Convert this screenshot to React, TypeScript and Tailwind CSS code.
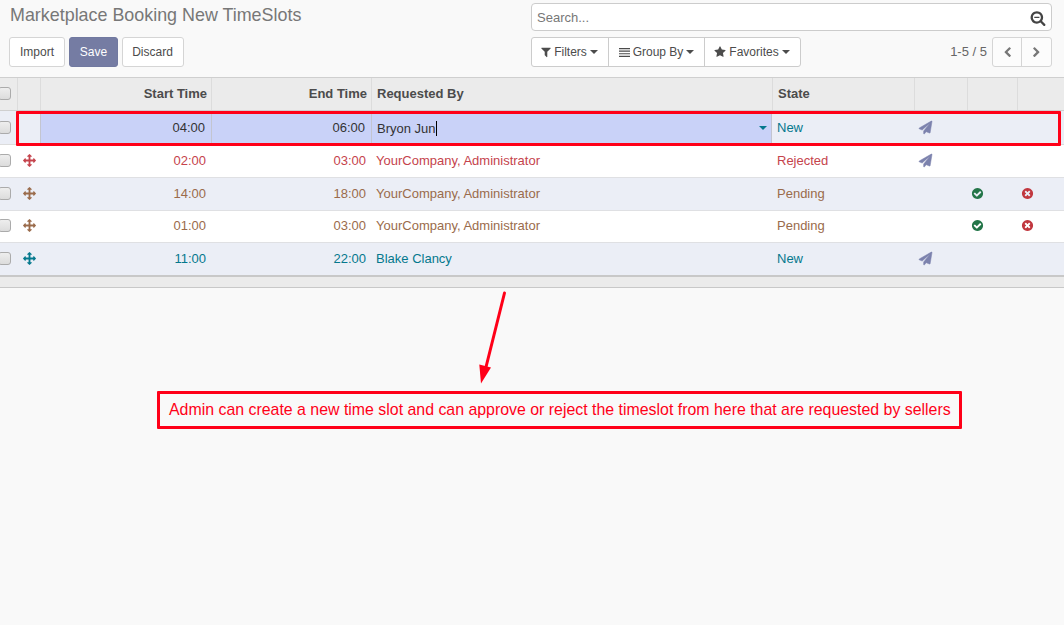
import React from "react";

const DISC =
  "m387-226q0 209-103 385.5t-279.5 279.5-385.5 103-385.5-103-279.5-279.5-103-385.5 103-385.5 279.5-279.5 385.5-103 385.5 103 279.5 279.5 103 385.5z";

const ICONS = {
  plane:
    "M1764 11q33 24 27 64l-256 1536q-5 29-32 45-14 8-31 8-11 0-24-5l-453-185-242 295q-18 23-49 23-13 0-22-4-19-7-30.5-23.5t-11.5-36.5v-349l864-1059-1069 925-395-162q-37-14-40-55-2-40 32-59l1664-960q15-9 32-9 20 0 36 11z",
  move:
    "M1792 896q0 26-19 45l-256 256q-19 19-45 19t-45-19-19-45v-128h-384v384h128q26 0 45 19t19 45-19 45l-256 256q-19 19-45 19t-45-19l-256-256q-19-19-19-45t19-45 45-19h128v-384h-384v128q0 26-19 45t-45 19-45-19l-256-256q-19-19-19-45t19-45l256-256q19-19 45-19t45 19 19 45v128h384v-384h-128q-26 0-45-19t-19-45 19-45l256-256q19-19 45-19t45 19l256 256q19 19 19 45t-19 45-45 19h-128v384h384v-128q0-26 19-45t45-19 45 19l256 256q19 19 19 45z",
  check:
    "M1412 734q0-28-18-46l-91-90q-19-19-45-19t-45 19l-408 407-226-226q-19-19-45-19t-45 19l-91 90q-18 18-18 46 0 27 18 45l362 362q19 19 45 19 27 0 46-19l543-543q18-18 18-45zm252 162q0 209-103 385.5t-279.5 279.5-385.5 103-385.5-103-279.5-279.5-103-385.5 103-385.5 279.5-279.5 385.5-103 385.5 103 279.5 279.5 103 385.5z",
  times:
    "M1277 1122q0-26-19-45l-181-181 181-181q19-19 19-45 0-27-19-46l-90-90q-19-19-46-19-26 0-45 19l-181 181-181-181q-19-19-45-19-27 0-46 19l-90 90q-19 19-19 46 0 26 19 45l181 181-181 181q-19 19-19 45 0 27 19 46l90 90q19 19 46 19 26 0 45-19l181-181 181 181q19 19 45 19 27 0 46-19l90-90q19-19 19-46z" +
    DISC,
  filter:
    "M1595 295q17 41-14 70l-493 493v742q0 42-39 59-13 5-25 5-27 0-45-19l-256-256q-19-19-19-45v-486l-493-493q-31-29-14-70 17-39 59-39h1280q42 0 59 39z",
  star:
    "M1728 647q0 22-26 48l-363 354 86 500q1 7 1 20 0 21-10.5 35.5t-30.5 14.5q-19 0-40-12l-449-236-449 236q-22 12-40 12-21 0-31.5-14.5t-10.5-35.5q0-6 2-20l86-500-364-354q-25-27-25-48 0-37 56-46l502-73 225-455q19-41 49-41t49 41l225 455 502 73q56 9 56 46z",
  bars: "M0 170h1792v190H0zM0 590h1792v190H0zM0 1010h1792v190H0zM0 1430h1792v190H0z",
  searchMinus:
    "M480 768h576v128h-576zM1216 832q0-185-131.5-316.5t-316.5-131.5-316.5 131.5-131.5 316.5 131.5 316.5 316.5 131.5 316.5-131.5 131.5-316.5zm512 832q0 52-38 90t-90 38q-54 0-90-38l-343-342q-179 124-399 124-143 0-273.5-55.5t-225-150-150-225-55.5-273.5 55.5-273.5 150-225 225-150 273.5-55.5 273.5 55.5 225 150 150 225 55.5 273.5q0 220-124 399l343 343q37 37 37 90z",
  chevron:
    "M1427 301l-531 531 531 531q19 19 19 45t-19 45l-166 166q-19 19-45 19t-45-19l-742-742q-19-19-19-45t19-45l742-742q19-19 45-19t45 19l166 166q19 19 19 45t-19 45z",
};

function Icon({ name, className }: { name: keyof typeof ICONS; className: string }) {
  return (
    <svg viewBox="0 0 1792 1792" fill="currentColor" fillRule="evenodd" className={`shrink-0 ${className}`}>
      <path d={ICONS[name]} />
    </svg>
  );
}

function Plane() {
  return <Icon name="plane" className="h-[13px] w-[13px] overflow-visible stroke-current [stroke-width:70]" />;
}

function Caret({ className = "" }: { className?: string }) {
  return (
    <svg viewBox="0 0 8 4" fill="currentColor" className={`h-1 w-2 shrink-0 ${className}`}>
      <path d="M0 0h8L4 4z" />
    </svg>
  );
}

function Checkbox() {
  return (
    <span className="-ml-0.5 block h-[13px] w-[13px] shrink-0 rounded-[3px] border border-[#ababab] bg-linear-to-b from-[#eeeeee] to-[#dcdcdc]" />
  );
}

type Row = { start: string; end: string; by: string; state: string; color: string; bg: string; pending?: boolean };

const rows: Row[] = [
  { start: "02:00", end: "03:00", by: "YourCompany, Administrator", state: "Rejected", color: "text-[#c5434c]", bg: "bg-white" },
  { start: "14:00", end: "18:00", by: "YourCompany, Administrator", state: "Pending", color: "text-[#9a6b4b]", bg: "bg-[#ebeef6]", pending: true },
  { start: "01:00", end: "03:00", by: "YourCompany, Administrator", state: "Pending", color: "text-[#9a6b4b]", bg: "bg-white", pending: true },
  { start: "11:00", end: "22:00", by: "Blake Clancy", state: "New", color: "text-[#04788d]", bg: "bg-[#ebeef6]" },
];

const COLS = "grid grid-cols-[17px_23px_171px_160px_401px_142px_53px_50px_47px]";

function Header() {
  const cell = "flex items-center border-l border-[#dcdcdc]";
  return (
    <div className={`${COLS} h-[34px] border-y border-[#cfcfcf] bg-[#ebebeb] font-bold text-[#4c4c4c]`}>
      <div className="flex items-center pb-0.5"><Checkbox /></div>
      <div className={cell} />
      <div className={`${cell} justify-end pr-1`}>Start Time</div>
      <div className={`${cell} justify-end pr-1`}>End Time</div>
      <div className={`${cell} pl-[5px]`}>Requested By</div>
      <div className={`${cell} pl-[5px]`}>State</div>
      <div className={cell} />
      <div className={cell} />
      <div className={cell} />
    </div>
  );
}

function EditRow() {
  const cell = "flex items-center border-l border-[#c3c5d0] bg-[#c9d2f8] text-[#333]";
  return (
    <div className={`${COLS} h-[34px] border-b border-[#dcdcdc] bg-[#ebeef6]`}>
      <div className="flex items-center"><Checkbox /></div>
      <div />
      <div className={`${cell} justify-end pr-1.5`}>04:00</div>
      <div className={`${cell} justify-end pr-1.5`}>06:00</div>
      <div className={`${cell} border-r pr-1 pl-[5px] text-[#222]`}>
        <span className="pt-0.5">Bryon Jun</span>
        <span className="mt-0.5 h-[15px] w-px bg-black" />
        <Caret className="ml-auto text-[#04788d]" />
      </div>
      <div className="flex items-center pl-[5px] text-[#04788d]">New</div>
      <div className="flex items-center pl-[5px] text-[#7c82ad]"><Plane /></div>
    </div>
  );
}

function SlotRow({ row, last }: { row: Row; last: boolean }) {
  return (
    <div className={`${COLS} ${row.bg} ${row.color} ${last ? "h-[34px] border-b-2 border-[#c8c8c8]" : "h-[32.8px] border-b border-[#dfe0e3]"}`}>
      <div className="flex items-center pb-px"><Checkbox /></div>
      <div className="flex items-center justify-center pb-px pl-px"><Icon name="move" className="h-[13px] w-[13px]" /></div>
      <div className="flex items-center justify-end pr-[5px]">{row.start}</div>
      <div className="flex items-center justify-end pr-[5px]">{row.end}</div>
      <div className="flex items-center pl-[5px]">{row.by}</div>
      <div className="flex items-center pl-[5px]">{row.state}</div>
      <div className="flex items-center pb-px pl-[5px] text-[#7c82ad]">
        {!row.pending && <Plane />}
      </div>
      <div className="flex items-center pb-px pl-1 text-[#237548]">
        {row.pending && <Icon name="check" className="h-[13px] w-[13px]" />}
      </div>
      <div className="flex items-center pb-px pl-1 text-[#c1373f]">
        {row.pending && <Icon name="times" className="h-[13px] w-[13px]" />}
      </div>
    </div>
  );
}

export default function App() {
  const btn = "flex h-[30px] items-center justify-center rounded-[3px] border";
  return (
    <div className="relative h-[625px] w-[1064px] overflow-hidden bg-[#f9f9f9] font-['Liberation_Sans',Arial,sans-serif] text-[13px] leading-[18px]">
      <div className="flex h-[77px] justify-between pr-3 pl-[9px]">
        <div>
          <h1 className="mt-[3px] h-[34px] pl-px text-[17.9px] leading-6 whitespace-nowrap text-[#777]">Marketplace Booking New TimeSlots</h1>
          <div className="flex gap-1 text-[12px] text-[#4c4c4c]">
            <button className={`${btn} w-14 border-[#d5d5d5] bg-white`}>Import</button>
            <button className={`${btn} w-[49px] border-[#7179a0] bg-[#757ca3] text-white`}>Save</button>
            <button className={`${btn} w-[62px] border-[#d5d5d5] bg-white pr-px`}>Discard</button>
          </div>
        </div>
        <div className="w-[521px]">
          <div className="mt-[3px] flex h-7 items-center justify-between rounded-[4px] border border-[#ccc] bg-white pr-[5px] pl-[5px] text-[#777]">
            <span className="pt-px">Search...</span>
            <Icon name="searchMinus" className="mt-0.5 h-4 w-4 text-[#444]" />
          </div>
          <div className="mt-1.5 flex h-[30px] items-center justify-between text-[12px] text-[#4c4c4c]">
            <div className="flex h-[30px] rounded-[3px] border border-[#ccc] bg-white">
              <button className="flex w-[77px] items-center justify-center border-r border-[#ccc] pr-0.5">
                <Icon name="filter" className="mr-0.5 h-3 w-3" />Filters<Caret className="ml-[3px]" />
              </button>
              <button className="flex w-24 items-center justify-center border-r border-[#ccc]">
                <Icon name="bars" className="mr-[3px] h-[11px] w-[11px]" />Group By<Caret className="ml-[3px]" />
              </button>
              <button className="flex w-[95px] items-center justify-center pr-px">
                <Icon name="star" className="mr-[3px] h-3 w-3" />Favorites<Caret className="ml-[3px]" />
              </button>
            </div>
            <div className="flex items-center text-[13px] text-[#666]">
              <span className="mr-[5px]">1-5 / 5</span>
              <div className="flex h-[30px] rounded-[3px] border border-[#d5d5d5] bg-[#fcfcfc] text-[#777]">
                <button className="flex w-[29px] items-center justify-center border-r border-[#d5d5d5]"><Icon name="chevron" className="h-[11px] w-[11px]" /></button>
                <button className="flex w-[29px] items-center justify-center"><Icon name="chevron" className="h-[11px] w-[11px] -scale-x-100" /></button>
              </div>
            </div>
          </div>
        </div>
      </div>
      <Header />
      <EditRow />
      {rows.map((row, i) => (
        <SlotRow key={i} row={row} last={i === rows.length - 1} />
      ))}
      <div className="h-[11px] border-b border-[#c8c8c8] bg-[#ebebeb]" />

      <div className="absolute top-[111px] left-4 h-[35px] w-[1045px] rounded-[1px] border-[3px] border-[#ff0018]" />
      <svg viewBox="0 0 40 100" className="absolute top-[288px] left-[470px] h-[100px] w-10 text-[#ff0018]">
        <path d="M34.5 5L16 79" stroke="currentColor" strokeWidth="3" strokeLinecap="round" />
        <path d="M9.3 76.5L21 79.5L11 95.5z" fill="currentColor" />
      </svg>
      <div className="absolute top-[391px] left-[157px] flex h-[38px] w-[805px] items-center rounded-[1px] border-[3px] border-[#ff0018] pl-[9px] text-[15.9px] whitespace-nowrap text-[#ff0018]">
        Admin can create a new time slot and can approve or reject the timeslot from here that are requested by sellers
      </div>
    </div>
  );
}
